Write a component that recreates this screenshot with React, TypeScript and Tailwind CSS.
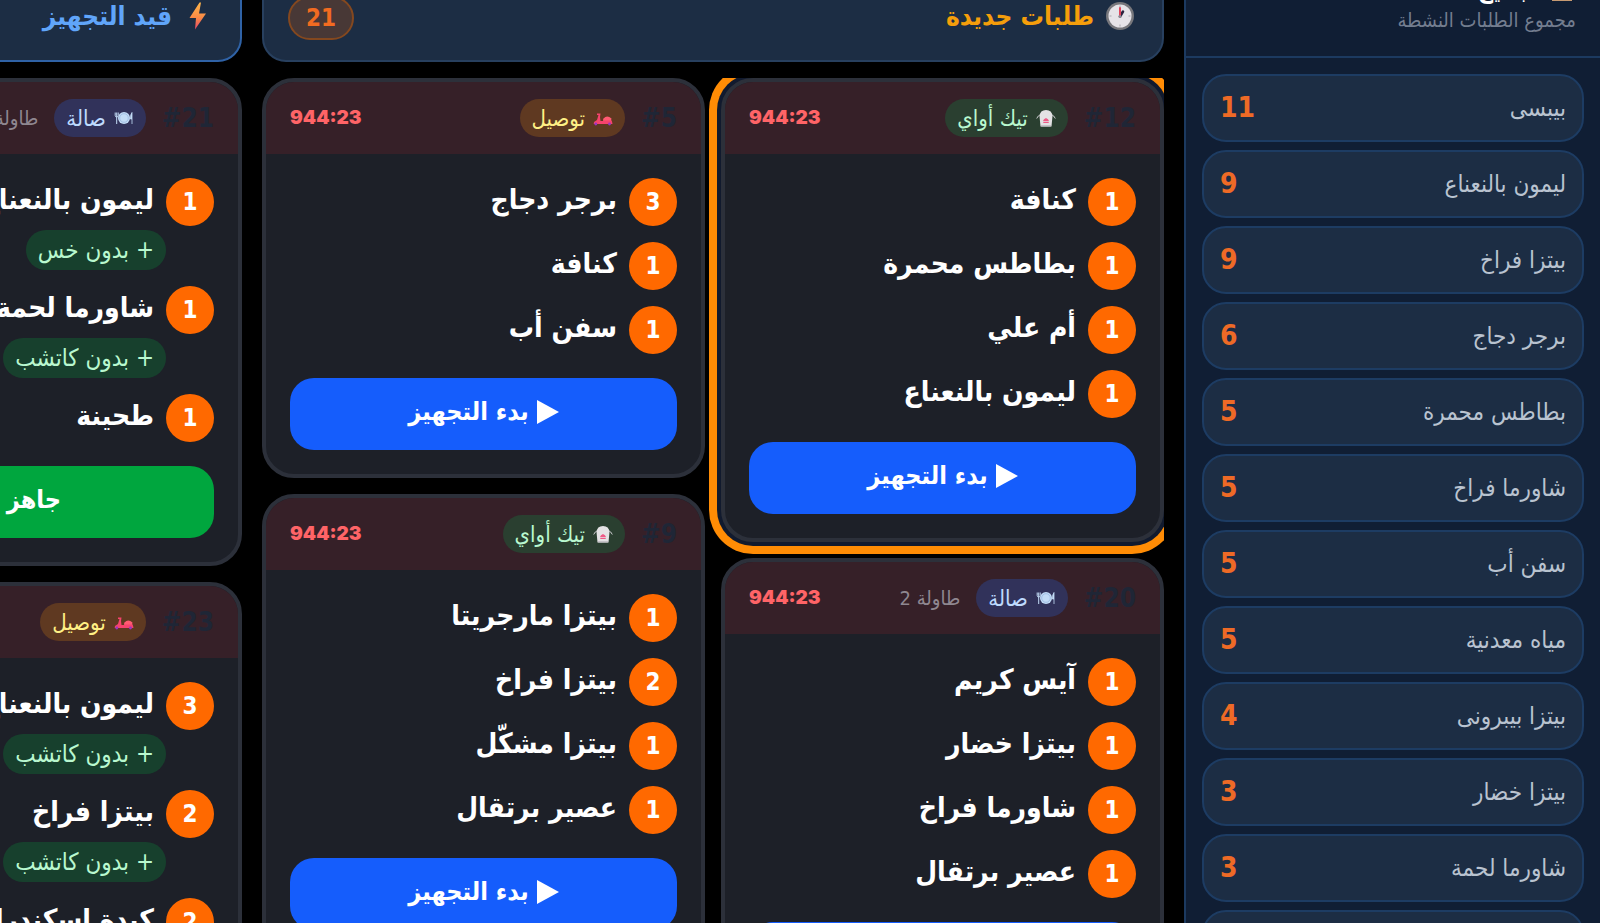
import clsx from 'clsx';

type OrderType = 'takeaway' | 'delivery' | 'dinein';

interface OrderItem {
  qty: number;
  name: string;
  note?: string;
}

interface Order {
  id: number;
  type: OrderType;
  table?: string;
  elapsed: string;
  items: OrderItem[];
  highlighted?: boolean;
}

const SUMMARY = [
  { name: 'بيبسى', count: 11 },
  { name: 'ليمون بالنعناع', count: 9 },
  { name: 'بيتزا فراخ', count: 9 },
  { name: 'برجر دجاج', count: 6 },
  { name: 'بطاطس محمرة', count: 5 },
  { name: 'شاورما فراخ', count: 5 },
  { name: 'سفن أب', count: 5 },
  { name: 'مياه معدنية', count: 5 },
  { name: 'بيتزا بيبرونى', count: 4 },
  { name: 'بيتزا خضار', count: 3 },
  { name: 'شاورما لحمة', count: 3 },
  { name: 'كنافة', count: 3 },
];

const NEW_ORDERS: Order[][] = [
  [
    {
      id: 12,
      type: 'takeaway',
      elapsed: '944:23',
      highlighted: true,
      items: [
        { qty: 1, name: 'كنافة' },
        { qty: 1, name: 'بطاطس محمرة' },
        { qty: 1, name: 'أم علي' },
        { qty: 1, name: 'ليمون بالنعناع' },
      ],
    },
    {
      id: 20,
      type: 'dinein',
      table: 'طاولة 2',
      elapsed: '944:23',
      items: [
        { qty: 1, name: 'آيس كريم' },
        { qty: 1, name: 'بيتزا خضار' },
        { qty: 1, name: 'شاورما فراخ' },
        { qty: 1, name: 'عصير برتقال' },
      ],
    },
  ],
  [
    {
      id: 5,
      type: 'delivery',
      elapsed: '944:23',
      items: [
        { qty: 3, name: 'برجر دجاج' },
        { qty: 1, name: 'كنافة' },
        { qty: 1, name: 'سفن أب' },
      ],
    },
    {
      id: 9,
      type: 'takeaway',
      elapsed: '944:23',
      items: [
        { qty: 1, name: 'بيتزا مارجريتا' },
        { qty: 2, name: 'بيتزا فراخ' },
        { qty: 1, name: 'بيتزا مشكّل' },
        { qty: 1, name: 'عصير برتقال' },
      ],
    },
  ],
];

const PREPARING_ORDERS: Order[] = [
  {
    id: 21,
    type: 'dinein',
    table: 'طاولة 3',
    elapsed: '944:23',
    items: [
      { qty: 1, name: 'ليمون بالنعناع', note: 'بدون خس' },
      { qty: 1, name: 'شاورما لحمة', note: 'بدون كاتشب' },
      { qty: 1, name: 'طحينة' },
    ],
  },
  {
    id: 23,
    type: 'delivery',
    elapsed: '944:23',
    items: [
      { qty: 3, name: 'ليمون بالنعناع', note: 'بدون كاتشب' },
      { qty: 2, name: 'بيتزا فراخ', note: 'بدون كاتشب' },
      { qty: 2, name: 'كبدة إسكندراني' },
    ],
  },
];

const TYPE_LABELS = { takeaway: 'تيك أواي', delivery: 'توصيل', dinein: 'صالة' };

const TYPE_STYLES = {
  takeaway: 'bg-[#2a3f30] text-green-200',
  delivery: 'bg-[#5f3921] text-yellow-200',
  dinein: 'bg-[#31325a] text-blue-200',
};

function ClockIcon() {
  return (
    <svg viewBox="0 0 28 28" className="size-7" aria-hidden="true">
      <circle cx="14" cy="14" r="14" fill="#77777c" />
      <circle cx="14" cy="14" r="11.5" fill="#e6e3e8" />
      <path d="M14 3.5v2M14 22.5v2M3.5 14h2M22.5 14h2" stroke="#a9a7ae" strokeWidth="1" />
      <path d="M14 14.5 17 9.5" stroke="#2c2440" strokeWidth="2.6" strokeLinecap="round" />
      <path d="M14 14V6" stroke="#e0445c" strokeWidth="2" strokeLinecap="round" />
      <circle cx="14" cy="14.5" r="1.6" fill="#8d8b95" />
    </svg>
  );
}

function BoltIcon() {
  return (
    <svg viewBox="0 0 28 28" className="size-7" aria-hidden="true">
      <defs>
        <linearGradient id="bolt" x1="0" y1="0" x2="0" y2="1">
          <stop offset="0" stopColor="#fdb64b" />
          <stop offset="0.55" stopColor="#f98a45" />
          <stop offset="1" stopColor="#e8476a" />
        </linearGradient>
      </defs>
      <path d="M15.5.5 5.5 16h6.500L11 27.500 22 11.500h-7L17 .5z" fill="url(#bolt)" />
    </svg>
  );
}

function BoxIcon() {
  return (
    <svg viewBox="0 0 28 28" className="size-7" aria-hidden="true">
      <path d="M4 8 14 3l10 5v17H4z" fill="#c69a72" />
      <path d="M4 8h20v5H4z" fill="#dcb48c" />
      <path d="M12 4h4v11h-4z" fill="#a5754c" />
    </svg>
  );
}

function TypeIcon({ type }: { type: OrderType }) {
  if (type === 'takeaway') {
    return (
      <svg viewBox="0 0 20 20" className="size-5" aria-hidden="true">
        <path d="M4.500 6.500Q2 7.500.7 10.500M15.500 6.500Q18 7.500 19.300 10.500" fill="none" stroke="#c9c9cc" strokeWidth="1" />
        <path d="M3.500 8Q4 2 10 2t6.500 6l-1 10.500h-11z" fill="#e4e2e4" />
        <path d="M5 17h10l-.2 1.500H5.200z" fill="#c4c1c6" />
        <path d="M10 10q-2.500 1-3 3h6q-.500-2-3-3zM7.300 13.700h5.400V15H7.300z" fill="#ee5a86" />
      </svg>
    );
  }
  if (type === 'delivery') {
    return (
      <svg viewBox="0 0 20 20" className="size-5" aria-hidden="true">
        <path d="M4 5.5h3.500L7 9l.5 4h2.500l1-3h2.500l4 .5 1.500 3 .5 2.500H.7l.3-2L4 12l1.500-5H4z" fill="#f5436d" />
        <path d="M10.500 10.500Q14 6.500 18.500 10.500l-.5 2h-8z" fill="#ff5a72" />
        <circle cx="2.800" cy="16" r="1.400" fill="#9b35c0" />
        <circle cx="16.500" cy="16" r="1.400" fill="#9b35c0" />
      </svg>
    );
  }
  return (
    <svg viewBox="0 0 20 20" className="size-5" aria-hidden="true">
      <circle cx="10" cy="10" r="6" fill="#c3dcf6" />
      <circle cx="10" cy="10" r="4.300" fill="none" stroke="#93b2dc" strokeWidth="0.7" />
      <path d="M1.200 4.500v3a1.500 1.500 0 0 0 3 0v-3M2.700 4.500v11.500" fill="none" stroke="#c3dcf6" strokeWidth="1" />
      <path d="M18 16V4.500q-1.800 2-1.500 6.500H18" fill="#c3dcf6" stroke="#c3dcf6" strokeWidth="0.8" />
    </svg>
  );
}

function OrderCard({ order, status }: { order: Order; status: 'new' | 'preparing' }) {
  return (
    <article
      className={clsx(
        'relative rounded-[32px] border-4 border-[#2c303a] bg-[#1d2028]',
        order.highlighted && 'ring-8 ring-[#ff8c05] ring-offset-4 ring-offset-[#111a2e]',
      )}
    >
      <header className="flex h-[72px] items-center justify-between rounded-t-[28px] bg-[#362028] px-6">
        <div className="flex items-center gap-4">
          <span dir="ltr" className="text-[26px] leading-9 font-bold text-[#1f2636]">#{order.id}</span>
          <span className={clsx('flex h-[38px] items-center gap-2 rounded-full px-3 text-[22px] whitespace-nowrap', TYPE_STYLES[order.type])}>
            <TypeIcon type={order.type} />
            {TYPE_LABELS[order.type]}
          </span>
          {order.table && <span className="text-xl whitespace-nowrap text-[#8f8790]">{order.table}</span>}
        </div>
        <time className="font-[Inter,sans-serif] text-[19px] leading-7 font-black text-red-400">{order.elapsed}</time>
      </header>

      <div className="p-6">
        <ul className="mb-6 flex flex-col gap-4">
          {order.items.map((item) => (
            <li key={item.name}>
              <div className="flex h-12 items-center gap-3">
                <span className="flex size-12 shrink-0 items-center justify-center rounded-full bg-[#ff6900] text-2xl font-bold text-white">
                  {item.qty}
                </span>
                <span className="pb-1 text-[28px] leading-10 font-bold whitespace-nowrap text-white">{item.name}</span>
              </div>
              {item.note && (
                <span className="ms-12 mt-1 flex h-10 w-fit items-center rounded-full bg-[#17402d] px-3 text-2xl whitespace-nowrap text-green-200">
                  + {item.note}
                </span>
              )}
            </li>
          ))}
        </ul>
        <button
          type="button"
          className={clsx(
            'flex h-[72px] w-full items-center justify-center gap-2 rounded-3xl pb-1 text-[25px] font-bold text-white',
            status === 'new' ? 'bg-[#155dfc]' : 'bg-[#00a63e]',
          )}
        >
          {status === 'new' ? (
            <>
              <svg viewBox="0 0 22 24" className="h-6 w-[22px]" aria-hidden="true">
                <path d="M0 0v24l22-12z" fill="currentColor" />
              </svg>
              بدء التجهيز
            </>
          ) : (
            'جاهز ✓'
          )}
        </button>
      </div>
    </article>
  );
}

export default function App() {
  return (
    <div
      dir="rtl"
      className="h-screen overflow-hidden bg-black font-['DejaVu_Sans_Condensed','DejaVu_Sans',sans-serif]"
    >
      {/* The board is scrolled down a little */}
      <div className="-mt-[26px] flex">
        {/* Totals sidebar */}
        <aside className="w-[416px] shrink-0 border-e-2 border-[#1c3a60] bg-[#101e34]">
          <header className="border-b-2 border-[#1c3a60] px-6 pb-[22px]">
            <h2 className="flex h-8 items-center gap-2 text-2xl font-bold text-white">
              <BoxIcon />
              تجميع
            </h2>
            <p className="text-xl leading-7 text-[#737d8f]">مجموع الطلبات النشطة</p>
          </header>
          <ul className="flex flex-col gap-2 p-4">
            {SUMMARY.map((row) => (
              <li
                key={row.name}
                className="flex h-[68px] items-center justify-between rounded-3xl border-2 border-[#1d3c63] bg-[#1c2d44] px-4"
              >
                <span className="text-2xl text-[#b9c3d0]">{row.name}</span>
                <span className="text-[28px] leading-9 font-bold text-[#ee6a26]">{row.count}</span>
              </li>
            ))}
          </ul>
        </aside>

        {/* Order columns */}
        <main className="grid min-w-0 flex-1 grid-cols-[minmax(902px,1fr)_443px] gap-5 overflow-hidden ps-5">
          <section>
            <header className="flex h-[88px] items-center justify-between rounded-3xl border-2 border-[#28405f] bg-[#1c2d44] ps-7 pe-6">
              <h2 className="flex items-center gap-3 pb-1 text-[26px] font-bold text-[#f59e0b]">
                <ClockIcon />
                طلبات جديدة
              </h2>
              <span className="flex h-11 w-[66px] items-center justify-center rounded-full border-2 border-[#84481f] bg-[#483836] text-2xl font-bold text-[#f26b21]">
                21
              </span>
            </header>
            <div className="mt-4 grid grid-cols-2 gap-4 overflow-hidden">
              {NEW_ORDERS.map((column, i) => (
                <div key={i} className="flex flex-col gap-4">
                  {column.map((order) => (
                    <OrderCard key={order.id} order={order} status="new" />
                  ))}
                </div>
              ))}
            </div>
          </section>

          <section>
            <header className="flex h-[88px] items-center rounded-3xl border-2 border-[#2f62a6] bg-[#1c2d44] px-7">
              <h2 className="flex items-center gap-3 pb-1 text-[26px] font-bold text-[#60a5fa]">
                <BoltIcon />
                قيد التجهيز
              </h2>
            </header>
            <div className="mt-4 flex flex-col gap-4">
              {PREPARING_ORDERS.map((order) => (
                <OrderCard key={order.id} order={order} status="preparing" />
              ))}
            </div>
          </section>
        </main>
      </div>
    </div>
  );
}
